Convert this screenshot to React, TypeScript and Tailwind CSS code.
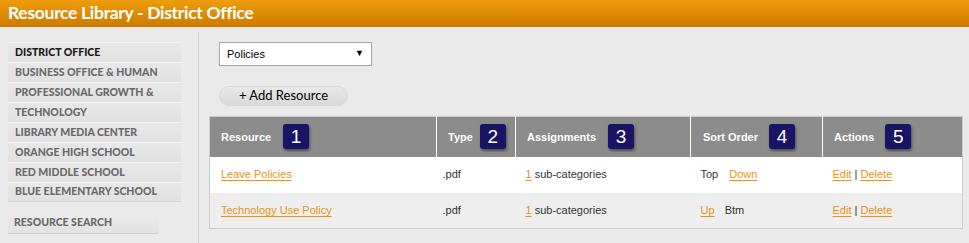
const sideItems = [
  'DISTRICT OFFICE',
  'BUSINESS OFFICE & HUMAN',
  'PROFESSIONAL GROWTH &',
  'TECHNOLOGY',
  'LIBRARY MEDIA CENTER',
  'ORANGE HIGH SCHOOL',
  'RED MIDDLE SCHOOL',
  'BLUE ELEMENTARY SCHOOL',
];

function Badge({ n, className = 'ml-[12px]' }: { n: number; className?: string }) {
  return (
    <span
      className={`${className} inline-flex h-[25px] w-[26px] items-center justify-center rounded-[3px] bg-[#1b1464] text-[19px] font-normal leading-none text-white shadow-[1px_2px_3px_rgba(0,0,0,0.45)]`}
    >
      {n}
    </span>
  );
}

function Link({ children }: { children: React.ReactNode }) {
  return <a className="cursor-pointer text-[#e8940e] underline underline-offset-[2px]">{children}</a>;
}

const rows = [
  { name: 'Leave Policies', sort: 'top', bg: 'bg-white' },
  { name: 'Technology Use Policy', sort: 'btm', bg: 'bg-[#eeeeee]' },
];

export default function App() {
  return (
    <div className="h-[243px] w-[969px] overflow-hidden bg-[#eaeaea] font-['Liberation_Sans',Arial,sans-serif]">
      <div className="flex h-[27px] items-center bg-gradient-to-b from-[#ef9d0d] to-[#cb7b00] pl-[8px]">
        <h1 className="font-['Lato',sans-serif] text-[17.5px] font-bold tracking-[-0.3px] text-white">
          Resource Library - District Office
        </h1>
      </div>

      <div className="flex pt-[5px]">
        <div className="w-[198px] shrink-0 pl-[8px] pt-[10px]">
          <ul className="w-[173px]">
            {sideItems.map((item, i) => (
              <li
                key={item}
                className={`flex h-[20px] items-center border-t border-[#f3f3f3] bg-gradient-to-b from-[#e8e8e8] to-[#e1e1e1] pl-[7px] font-['Lato',sans-serif] text-[10.5px] font-black ${
                  i === 0 ? 'text-[#1a1a1a]' : 'text-[#6a6a6a]'
                } ${i === sideItems.length - 1 ? 'border-b border-b-[#d6d6d6]' : ''}`}
              >
                {item}
              </li>
            ))}
          </ul>
          <div className="mt-[10px] flex h-[22px] w-[150px] items-center border-b border-[#cfcfcf] bg-gradient-to-b from-[#ececec] to-[#e2e2e2] pl-[6px] font-['Lato',sans-serif] text-[10.5px] font-black text-[#6a6a6a]">
            RESOURCE SEARCH
          </div>
        </div>

        <div className="h-[240px] flex-1 border-l border-[#d2d2d2] pl-[10px] pt-[10px]">
          <div className="ml-[10px] flex h-[24px] w-[153px] items-center justify-between border border-[#a8a8a8] bg-white pl-[7px] pr-[7px] text-[11px] text-black">
            <span>Policies</span>
            <span className="text-[9px]">▼</span>
          </div>

          <button className="ml-[10px] mt-[20px] flex h-[20px] w-[129px] items-center justify-center rounded-full border border-[#d8d8d8] bg-gradient-to-b from-[#e8e8e8] to-[#d9d9d9] font-['Lato',sans-serif] text-[13px] text-black">
            + Add Resource
          </button>

          <table className="mt-[10px] w-[753px] table-fixed border-collapse border border-[#cccccc] text-[11px]">
            <colgroup>
              <col className="w-[227px]" />
              <col className="w-[79px]" />
              <col className="w-[175px]" />
              <col className="w-[132px]" />
              <col className="w-[140px]" />
            </colgroup>
            <thead>
              <tr className="h-[40px] bg-[#8c8c8c] text-left font-bold text-white">
                <th className="pl-[11px]">
                  <span className="inline-flex items-center">Resource<Badge n={1} /></span>
                </th>
                <th className="border-l border-white pl-[11px]">
                  <span className="inline-flex items-center">Type<Badge n={2} className="ml-[7px]" /></span>
                </th>
                <th className="border-l border-white pl-[11px]">
                  <span className="inline-flex items-center">Assignments<Badge n={3} /></span>
                </th>
                <th className="border-l border-white pl-[12px]">
                  <span className="inline-flex items-center">Sort Order<Badge n={4} className="ml-[11px]" /></span>
                </th>
                <th className="border-l border-white pl-[11px]">
                  <span className="inline-flex items-center">Actions<Badge n={5} className="ml-[11px]" /></span>
                </th>
              </tr>
            </thead>
            <tbody className="text-[#333333]">
              {rows.map((r) => (
                <tr key={r.name} className={`h-[36px] ${r.bg}`}>
                  <td className="pl-[11px]">
                    <Link>{r.name}</Link>
                  </td>
                  <td className="pl-[6px]">.pdf</td>
                  <td className="pl-[10px]">
                    <Link>1</Link> sub-categories
                  </td>
                  <td className="pl-[10px]">
                    {r.sort === 'top' ? (
                      <>
                        Top <span className="ml-[8px]"><Link>Down</Link></span>
                      </>
                    ) : (
                      <>
                        <Link>Up</Link> <span className="ml-[7px]">Btm</span>
                      </>
                    )}
                  </td>
                  <td className="pl-[10px]">
                    <Link>Edit</Link> | <Link>Delete</Link>
                  </td>
                </tr>
              ))}
            </tbody>
          </table>
        </div>
      </div>
    </div>
  );
}
